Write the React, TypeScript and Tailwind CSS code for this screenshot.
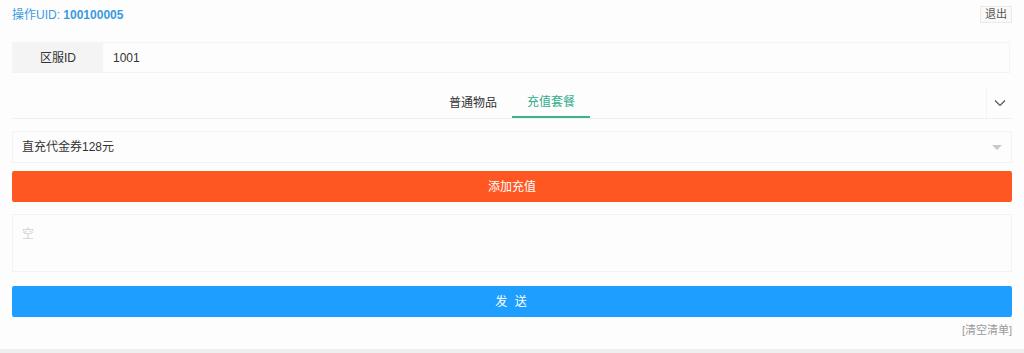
import React from 'react';

export default function App() {
  return (
    <div className="w-[1024px] h-[353px] bg-[#efefef] overflow-hidden" style={{ fontFamily: '"Liberation Sans", "Noto Sans CJK SC", sans-serif' }}>
      <div className="h-[349px] bg-[#fdfdfd] px-3 pt-[6px] text-[12px] text-[#333]">
        <div className="flex items-center justify-between h-[17px]">
          <span className="text-[#3a9be0]">
            操作UID: <b className="font-bold">100100005</b>
          </span>
          <button className="h-[17px] px-[4px] border border-[#ebebeb] bg-[#f9f9f9] text-[11px] text-[#555] leading-none">退出</button>
        </div>

        <div className="mt-[19px] flex h-[31px] border border-[#f4f4f4] mr-[2px]">
          <div className="w-[90px] bg-[#f4f4f4] flex items-center justify-center text-[#333]">区服ID</div>
          <div className="flex items-center pl-[10px]">1001</div>
        </div>

        <div className="mt-[15px] flex h-[31px] border-b border-[#f0f0f0]">
          <div className="flex-1 flex justify-center">
            <div className="flex ml-[26px]">
              <div className="w-[78px] flex items-center justify-center text-[#333]">普通物品</div>
              <div className="w-[78px] flex items-center justify-center text-[#2fad8a] border-b-2 border-[#3bb48f]">充值套餐</div>
            </div>
          </div>
          <div className="w-[26px] flex items-center justify-center border-l border-[#f4f4f4]">
            <svg width="12" height="8" viewBox="0 0 12 8" fill="none" stroke="#555" strokeWidth="1.2">
              <path d="M1 1.5 L6 6.5 L11 1.5" />
            </svg>
          </div>
        </div>

        <div className="mt-[12px] h-[32px] border border-[#f3f3f3] flex items-center justify-between pl-[9px] pr-[9px]">
          <span>直充代金券128元</span>
          <span className="w-0 h-0 border-l-[5px] border-r-[5px] border-t-[5px] border-l-transparent border-r-transparent border-t-[#c9c9c9]" />
        </div>

        <button className="mt-[8px] w-full h-[31px] bg-[#ff5722] text-white rounded-[2px] text-[12px]">添加充值</button>

        <div className="mt-[12px] h-[58px] border border-[#f3f3f3] pl-[9px] pt-[10px] text-[#d2d2d2]">空</div>

        <button className="mt-[14px] w-full h-[31px] bg-[#1e9fff] text-white rounded-[2px] text-[12px] tracking-[2px]">发 送</button>

        <div className="mt-[5px] text-right text-[11px] text-[#999]">[清空清单]</div>
      </div>
    </div>
  );
}
